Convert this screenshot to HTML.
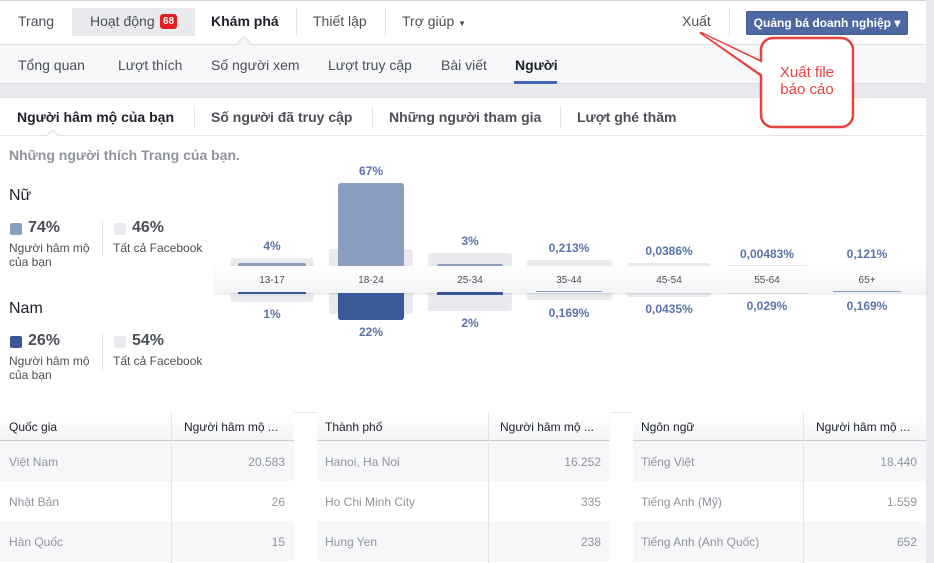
<!DOCTYPE html>
<html><head><meta charset="utf-8"><style>
*{margin:0;padding:0;box-sizing:border-box}
body{width:934px;height:563px;overflow:hidden;background:#e9eaed;font-family:"Liberation Sans",Arial,sans-serif;position:relative;color:#4b4f56}
.a{position:absolute;white-space:nowrap}
.top{left:0;top:0;width:926px;height:45px;background:#fff;border-top:1px solid #cfd1d5;border-bottom:1px solid #dddfe2}
.t{font-size:14px;color:#4b4f56;top:13px}
.sep{width:1px;background:#e5e5e5}
.sub{left:0;top:45px;width:926px;height:39px;background:#f6f7f9;border-bottom:1px solid #dddfe2}
.s{font-size:14px;color:#4b4f56;top:57px}
.card{left:0;top:97px;width:926px;height:466px;background:#fff;border-top:1px solid #dddfe2}
.h{font-size:14px;font-weight:bold;color:#4b4f56;top:109px}
.pct{font-size:12px;font-weight:bold;color:#5b74a8;text-align:center;width:100px}
.box{background:#e9eaed;border-radius:3px}
.lab{font-size:10px;color:#4b4f56;top:275px;width:84px;text-align:center}
.th{font-size:12px;color:#1d2129;top:420px}
.td{font-size:12px;color:#90949c}
</style></head><body>
<div class="a top"></div>
<div class="a" style="left:72px;top:8px;width:123px;height:28px;background:#e9eaed"></div>
<div class="a t" style="left:18px">Trang</div>
<div class="a t" style="left:90px">Hoạt động</div>
<div class="a" style="left:160px;top:14px;width:17px;height:15px;background:#e41c24;border-radius:3px;color:#fff;font-size:10px;font-weight:bold;text-align:center;line-height:15px">68</div>
<div class="a t" style="left:211px;font-weight:bold;color:#1d2129">Khám phá</div>
<div class="a" style="left:239px;top:38px;width:10px;height:10px;background:#f6f7f9;border-left:1px solid #dddfe2;border-top:1px solid #dddfe2;transform:rotate(45deg)"></div>
<div class="a sep" style="left:296px;top:8px;height:28px"></div>
<div class="a t" style="left:313px">Thiết lập</div>
<div class="a sep" style="left:385px;top:8px;height:28px"></div>
<div class="a t" style="left:402px">Trợ giúp <span style="font-size:8px">▼</span></div>
<div class="a t" style="left:682px">Xuất</div>
<div class="a sep" style="left:729px;top:8px;height:28px"></div>
<div class="a" style="left:746px;top:11px;width:162px;height:24px;background:#4e69a2;border:1px solid #435a8b;border-radius:2px;color:#fff;font-size:12px;font-weight:bold;line-height:22px;text-align:center">Quảng bá doanh nghiệp ▾</div>

<div class="a sub"></div>
<div class="a s" style="left:18px">Tổng quan</div>
<div class="a s" style="left:118px">Lượt thích</div>
<div class="a s" style="left:211px">Số người xem</div>
<div class="a s" style="left:328px">Lượt truy cập</div>
<div class="a s" style="left:441px">Bài viết</div>
<div class="a s" style="left:515px;font-weight:bold;color:#1d2129">Người</div>
<div class="a" style="left:514px;top:81px;width:43px;height:3px;background:#4267b2"></div>

<div class="a card"></div>
<div class="a" style="left:0;top:135px;width:926px;height:1px;background:#e5e5e5"></div>
<div class="a h" style="left:17px;color:#1d2129">Người hâm mộ của bạn</div>
<div class="a sep" style="left:194px;top:106px;height:22px"></div>
<div class="a h" style="left:211px">Số người đã truy cập</div>
<div class="a sep" style="left:372px;top:106px;height:22px"></div>
<div class="a h" style="left:389px">Những người tham gia</div>
<div class="a sep" style="left:560px;top:106px;height:22px"></div>
<div class="a h" style="left:577px">Lượt ghé thăm</div>
<div class="a" style="left:48px;top:131px;width:9px;height:9px;background:#fff;border-left:1px solid #dddfe2;border-top:1px solid #dddfe2;transform:rotate(45deg)"></div>

<div class="a" style="left:9px;top:147px;font-size:14px;font-weight:bold;color:#90949c">Những người thích Trang của bạn.</div>
<div class="a" style="left:9px;top:187px;font-size:16px;color:#1d2129">Nữ</div>
<div class="a" style="left:10px;top:223px;width:12px;height:12px;background:#8b9dc3;border-radius:2px"></div>
<div class="a" style="left:28px;top:219px;font-size:16px;font-weight:bold;color:#4b4f56">74%</div>
<div class="a" style="left:9px;top:241px;font-size:12px;line-height:14px">Người hâm mộ<br>của bạn</div>
<div class="a sep" style="left:102px;top:221px;height:36px"></div>
<div class="a" style="left:114px;top:223px;width:12px;height:12px;background:#e9eaed;border-radius:2px"></div>
<div class="a" style="left:132px;top:219px;font-size:16px;font-weight:bold">46%</div>
<div class="a" style="left:113px;top:241px;font-size:12px">Tất cả Facebook</div>

<div class="a" style="left:9px;top:300px;font-size:16px;color:#1d2129">Nam</div>
<div class="a" style="left:10px;top:336px;width:12px;height:12px;background:#3b5998;border-radius:2px"></div>
<div class="a" style="left:28px;top:332px;font-size:16px;font-weight:bold">26%</div>
<div class="a" style="left:9px;top:354px;font-size:12px;line-height:14px">Người hâm mộ<br>của bạn</div>
<div class="a sep" style="left:102px;top:334px;height:36px"></div>
<div class="a" style="left:114px;top:336px;width:12px;height:12px;background:#e9eaed;border-radius:2px"></div>
<div class="a" style="left:132px;top:332px;font-size:16px;font-weight:bold">54%</div>
<div class="a" style="left:113px;top:354px;font-size:12px">Tất cả Facebook</div>

<!-- chart boxes -->
<div class="a box" style="left:230px;top:258px;width:84px;height:44px"></div>
<div class="a box" style="left:329px;top:249px;width:84px;height:65px"></div>
<div class="a box" style="left:428px;top:253px;width:84px;height:58px"></div>
<div class="a box" style="left:527px;top:260px;width:85px;height:40px"></div>
<div class="a box" style="left:627px;top:263px;width:84px;height:34px"></div>
<div class="a box" style="left:725px;top:265px;width:85px;height:29px"></div>
<div class="a box" style="left:825px;top:266px;width:85px;height:27px"></div>
<!-- bars -->
<div class="a" style="left:238px;top:263px;width:68px;height:6px;background:#8b9dc3;border-radius:2px"></div>
<div class="a" style="left:338px;top:183px;width:66px;height:90px;background:#8b9dc3;border-radius:3px 3px 0 0"></div>
<div class="a" style="left:437px;top:264px;width:66px;height:6px;background:#8b9dc3;border-radius:2px"></div>
<div class="a" style="left:338px;top:290px;width:66px;height:30px;background:#3b5998;border-radius:0 0 3px 3px"></div>
<!-- band -->
<div class="a" style="left:215px;top:266px;width:711px;height:27px;background:linear-gradient(#fff,#f3f4f6);box-shadow:0 1px 2px rgba(0,0,0,.12)"></div>
<div class="a" style="left:338px;top:266px;width:66px;height:27px;background:linear-gradient(#fff,#f3f4f6)"></div>
<div class="a" style="left:238px;top:292px;width:68px;height:2px;background:#3b5998"></div>
<div class="a" style="left:338px;top:293px;width:66px;height:27px;background:#3b5998;border-radius:0 0 3px 3px"></div>
<div class="a" style="left:437px;top:292px;width:66px;height:3px;background:#3b5998"></div>
<div class="a" style="left:536px;top:291px;width:66px;height:1px;background:#8b9dc3"></div>
<div class="a" style="left:833px;top:291px;width:68px;height:1px;background:#8b9dc3"></div>
<div class="a lab" style="left:230px">13-17</div>
<div class="a lab" style="left:329px">18-24</div>
<div class="a lab" style="left:428px">25-34</div>
<div class="a lab" style="left:527px">35-44</div>
<div class="a lab" style="left:627px">45-54</div>
<div class="a lab" style="left:725px">55-64</div>
<div class="a lab" style="left:825px">65+</div>
<!-- percents -->
<div class="a pct" style="left:222px;top:239px">4%</div>
<div class="a pct" style="left:321px;top:164px">67%</div>
<div class="a pct" style="left:420px;top:234px">3%</div>
<div class="a pct" style="left:519px;top:241px">0,213%</div>
<div class="a pct" style="left:619px;top:244px">0,0386%</div>
<div class="a pct" style="left:717px;top:247px">0,00483%</div>
<div class="a pct" style="left:817px;top:247px">0,121%</div>
<div class="a pct" style="left:222px;top:307px">1%</div>
<div class="a pct" style="left:321px;top:325px">22%</div>
<div class="a pct" style="left:420px;top:316px">2%</div>
<div class="a pct" style="left:519px;top:306px">0,169%</div>
<div class="a pct" style="left:619px;top:302px">0,0435%</div>
<div class="a pct" style="left:717px;top:299px">0,029%</div>
<div class="a pct" style="left:817px;top:299px">0,169%</div>

<!-- tables -->
<div class="a" style="left:0;top:412px;width:926px;height:1px;background:#e5e5e5"></div>
<div class="a" style="left:0;top:412px;width:294px;height:151px">
 <div class="a" style="left:0;top:0;width:294px;height:29px;background:linear-gradient(#fff,#f3f4f6);border-bottom:1px solid #c9ccd1"></div>
 <div class="a" style="left:0;top:29px;width:294px;height:40px;background:#f6f7f9"></div>
 <div class="a" style="left:0;top:109px;width:294px;height:40px;background:#f6f7f9"></div>
 <div class="a" style="left:171px;top:0;width:1px;height:151px;background:#e5e5e5"></div>
</div>
<div class="a" style="left:317px;top:412px;width:293px;height:151px">
 <div class="a" style="left:0;top:0;width:293px;height:29px;background:linear-gradient(#fff,#f3f4f6);border-bottom:1px solid #c9ccd1"></div>
 <div class="a" style="left:0;top:29px;width:293px;height:40px;background:#f6f7f9"></div>
 <div class="a" style="left:0;top:109px;width:293px;height:40px;background:#f6f7f9"></div>
 <div class="a" style="left:171px;top:0;width:1px;height:151px;background:#e5e5e5"></div>
</div>
<div class="a" style="left:633px;top:412px;width:293px;height:151px">
 <div class="a" style="left:0;top:0;width:293px;height:29px;background:linear-gradient(#fff,#f3f4f6);border-bottom:1px solid #c9ccd1"></div>
 <div class="a" style="left:0;top:29px;width:293px;height:40px;background:#f6f7f9"></div>
 <div class="a" style="left:0;top:109px;width:293px;height:40px;background:#f6f7f9"></div>
 <div class="a" style="left:170px;top:0;width:1px;height:151px;background:#e5e5e5"></div>
</div>
<div class="a th" style="left:9px">Quốc gia</div>
<div class="a th" style="left:184px">Người hâm mộ ...</div>
<div class="a th" style="left:325px">Thành phố</div>
<div class="a th" style="left:500px">Người hâm mộ ...</div>
<div class="a th" style="left:641px">Ngôn ngữ</div>
<div class="a th" style="left:816px">Người hâm mộ ...</div>

<div class="a td" style="left:9px;top:455px">Việt Nam</div>
<div class="a td" style="left:9px;top:495px">Nhật Bản</div>
<div class="a td" style="left:9px;top:535px">Hàn Quốc</div>
<div class="a td" style="right:649px;top:455px">20.583</div>
<div class="a td" style="right:649px;top:495px">26</div>
<div class="a td" style="right:649px;top:535px">15</div>
<div class="a td" style="left:325px;top:455px">Hanoi, Ha Noi</div>
<div class="a td" style="left:325px;top:495px">Ho Chi Minh City</div>
<div class="a td" style="left:325px;top:535px">Hung Yen</div>
<div class="a td" style="right:333px;top:455px">16.252</div>
<div class="a td" style="right:333px;top:495px">335</div>
<div class="a td" style="right:333px;top:535px">238</div>
<div class="a td" style="left:641px;top:455px">Tiếng Việt</div>
<div class="a td" style="left:641px;top:495px">Tiếng Anh (Mỹ)</div>
<div class="a td" style="left:641px;top:535px">Tiếng Anh (Anh Quốc)</div>
<div class="a td" style="right:17px;top:455px">18.440</div>
<div class="a td" style="right:17px;top:495px">1.559</div>
<div class="a td" style="right:17px;top:535px">652</div>

<!-- callout -->
<svg class="a" style="left:0;top:0" width="934" height="140">
<path d="M701,33 L762,62 L762,76 Z" fill="#fff" stroke="#e8413f" stroke-width="2.5" stroke-linejoin="round"/>
<rect x="761" y="38" width="92" height="89" rx="12" fill="#fff" stroke="#e8413f" stroke-width="2.5"/>
<path d="M703,34 L763,63 L763,75 Z" fill="#fff"/>
</svg>
<div class="a" style="left:761px;top:64px;width:92px;text-align:center;font-size:15px;line-height:17px;color:#e8413f">Xuất file<br>báo cáo</div>
</body></html>
